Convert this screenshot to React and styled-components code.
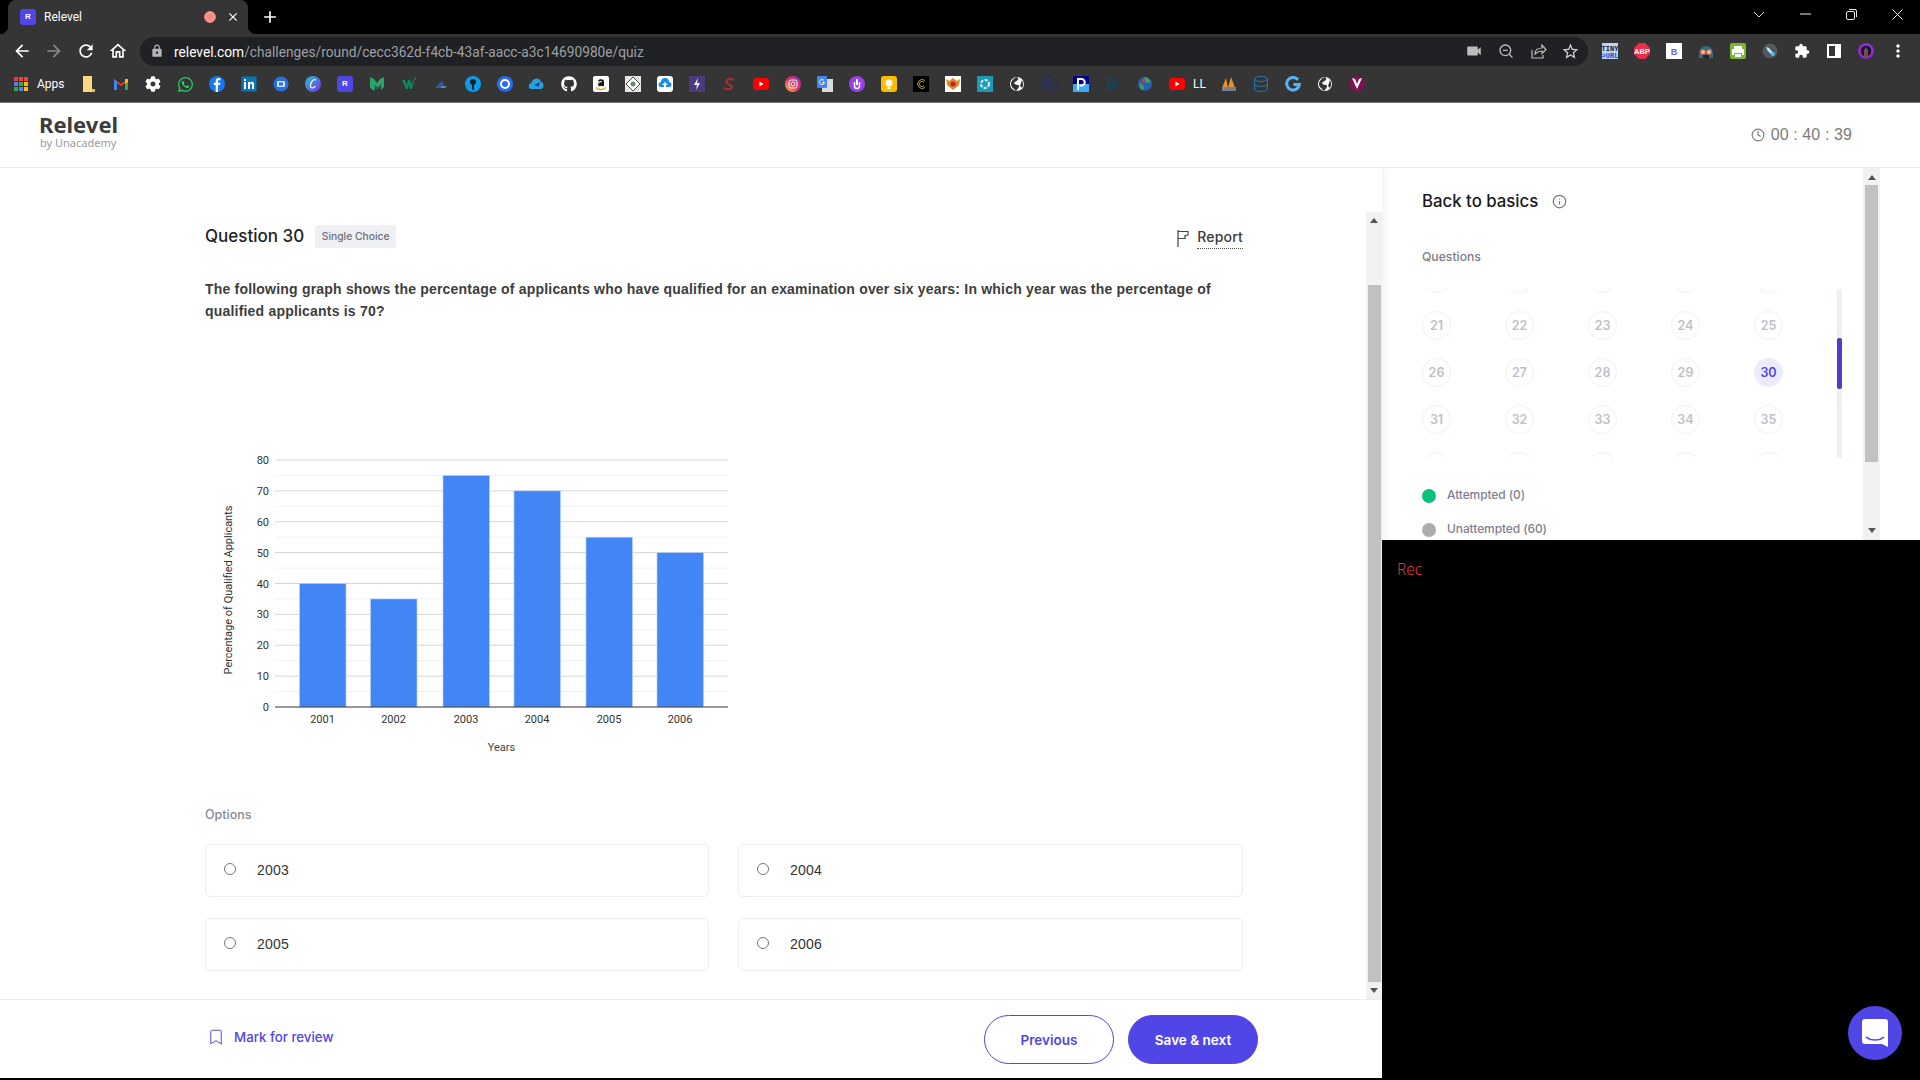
import React from 'react'
import styled, { createGlobalStyle } from 'styled-components'
import { FaWhatsapp, FaGithub, FaCog } from 'react-icons/fa'
import {
  MdArrowBack, MdArrowForward, MdRefresh, MdOutlineHome, MdLock, MdVideocam,
  MdStarBorder, MdExtension, MdMoreVert, MdClose, MdAdd,
} from 'react-icons/md'
import { LuZoomOut, LuClock, LuInfo, LuBookmark } from 'react-icons/lu'

const Global = createGlobalStyle`
  html, body { margin: 0; padding: 0; background: #fff; }
  body { font-family: "Inter", "Liberation Sans", sans-serif; overflow: hidden; }
  * { box-sizing: border-box; }
`

const Page = styled.div`
  width: 1920px;
  height: 1080px;
  display: flex;
  flex-direction: column;
  overflow: hidden;
`

/* browser chrome */
const TabStrip = styled.div`
  height: 34px;
  background: #000;
  display: flex;
  align-items: flex-end;
  padding-left: 8px;
  color: #fff;
`
const Tab = styled.div`
  position: relative;
  width: 240px;
  height: 34px;
  background: #353535;
  border-radius: 8px 8px 0 0;
  display: flex;
  align-items: center;
  padding: 0 8px 0 12px;
  font: 12px "Roboto", sans-serif;
  &:before, &:after {
    content: "";
    position: absolute;
    bottom: 0;
    width: 8px;
    height: 8px;
  }
  &:before { left: -8px; background: radial-gradient(circle at 0 0, transparent 8px, #353535 8.5px); }
  &:after { right: -8px; background: radial-gradient(circle at 100% 0, transparent 8px, #353535 8.5px); }
`
const Favicon = styled.span`
  width: 16px;
  height: 16px;
  border-radius: 3px;
  background: #5046e5;
  color: #fff;
  font: bold 8px/16px "Liberation Sans", sans-serif;
  text-align: center;
  flex: none;
`
const TabTitle = styled.span`
  margin-left: 8px;
  flex: 1;
`
const RecDot = styled.span`
  width: 12px;
  height: 12px;
  border-radius: 50%;
  background: #f28b82;
  border: 1px solid #e57373;
  box-shadow: inset 0 0 0 1px #f9b4ae;
  margin-right: 10px;
`
const NewTab = styled.div`
  width: 22px;
  height: 34px;
  margin-left: 11px;
  display: flex;
  align-items: center;
  justify-content: center;
  font-size: 20px;
`
const WindowButtons = styled.div`
  margin-left: auto;
  display: flex;
  height: 28px;
  align-items: center;
  align-self: flex-start;
`
const WindowButton = styled.div`
  width: 46px;
  height: 28px;
  display: flex;
  align-items: center;
  justify-content: center;
`
const Toolbar = styled.div`
  height: 34px;
  background: #353535;
  display: flex;
  align-items: center;
  color: #fff;
`
const NavButton = styled.div`
  width: 32px;
  height: 32px;
  display: flex;
  align-items: center;
  justify-content: center;
  font-size: ${p => p.$size || 20}px;
  color: ${p => p.$dim ? '#8b8b8b' : '#fff'};
`
const NavGroup = styled.div`
  display: flex;
  padding-left: 6px;
`
const Omnibox = styled.div`
  margin-left: 6px;
  width: 1448px;
  height: 29px;
  border-radius: 15px;
  background: #202124;
  display: flex;
  align-items: center;
  padding-left: 10px;
  font: 13.72px "Roboto", sans-serif;
  color: #9aa0a6;
`
const UrlText = styled.span`
  padding-top: 1px;
`
const LockIcon = styled(MdLock)`
  font-size: 14px;
  color: #b5b5b5;
  margin-right: 10px;
`
const Host = styled.span`
  color: #fff;
`
const OmniActions = styled.div`
  margin-left: auto;
  display: flex;
  padding-right: 2px;
  color: #bdbdbd;
`
const Extensions = styled.div`
  display: flex;
  margin-left: 6px;
`
const BookmarkBar = styled.div`
  height: 35px;
  background: #353535;
  border-bottom: 1px solid #777;
  display: flex;
  align-items: center;
  padding: 0 0 2px 5px;
  color: #fff;
`
const BookmarkSlot = styled.div`
  width: ${p => p.$width || 32}px;
  height: 32px;
  display: flex;
  align-items: center;
  justify-content: ${p => p.$width ? 'flex-start' : 'center'};
  flex: none;
  font-size: 16px;
`
const AppsLabel = styled.span`
  font: 12px "Roboto", sans-serif;
  width: 36px;
  flex: none;
`
const LLabel = styled.span`
  font: 12px "Roboto", sans-serif;
`

const Svg = ({ children }) => <svg width="16" height="16" viewBox="0 0 16 16">{children}</svg>

const Globe = () => (
  <Svg><circle cx="8" cy="8" r="7" fill="#fff" /><path d="M8 1c3 2 0 4-2 5s0 3 3 3-1 5-2 6c-3-3-5-4-5-7s3-6 6-7zM13 4c1 2 2 5 0 8l-2-2z" fill="#353535" /></Svg>
)
const Youtube = () => (
  <Svg><rect y="2" width="16" height="12" rx="3" fill="#f00" /><path d="M6.500 5.500l4 2.500-4 2.500z" fill="#fff" /></Svg>
)

const bookmarks = [
  { icon: <Svg><path d="M2 0h9v13h3v3H2z" fill="#fcd77f" /><path d="M11 13h3v3h-3z" fill="#f5b942" /></Svg> },
  { icon: <Svg><path d="M1 14V3l7 5 7-5v11h-3V7L8 10 4 7v7z" fill="#ea4335" /><path d="M1 14V3l3 3v8z" fill="#4285f4" /><path d="M15 14V3l-3 3v8z" fill="#34a853" /><path d="M12 3h3v3l-3 2z" fill="#fbbc04" /></Svg> },
  { icon: <FaCog /> },
  { icon: <FaWhatsapp color="#25d366" style={{ fontSize: 17 }} /> },
  { icon: <Svg><circle cx="8" cy="8" r="8" fill="#1877f2" /><path d="M9 16V9h2l.4-2.300H9V5.300c0-.7.3-1.100 1.200-1.100h1.200V2.200C11 2.100 10.300 2 9.600 2 7.800 2 6.700 3.100 6.700 5v1.700H4.800V9h1.900v7z" fill="#fff" /></Svg> },
  { icon: <Svg><rect width="15" height="15" x=".5" y=".5" fill="#0a76b4" /><path d="M3 6h2v7H3zM3 3h2v2H3zM7 6h2v1c.5-.8 1.200-1.200 2-1.200 1.500 0 2 1 2 2.700V13h-2V9c0-.8-.3-1.300-1-1.300S9 8.300 9 9v4H7z" fill="#fff" /></Svg> },
  { icon: <Svg><circle cx="8" cy="8" r="7.500" fill="#2272e6" /><rect x="4" y="5" width="8" height="6" rx="1" fill="#cfe0fb" /><rect x="6" y="6.500" width="4" height="3" fill="#2272e6" /></Svg> },
  { icon: <Svg><defs><linearGradient id="cv" x1="0" y1="0" x2="1" y2="1"><stop offset="0" stopColor="#1fc9d3" /><stop offset="1" stopColor="#7d2ae8" /></linearGradient></defs><circle cx="8" cy="8" r="8" fill="url(#cv)" /><path d="M11 4C8 2.500 5 7 5.500 10.500 6 13 9 12 10.500 10" fill="none" stroke="#fff" strokeWidth="1.200" /></Svg> },
  { icon: <Favicon>R</Favicon> },
  { icon: <Svg><path d="M1 1l4 2 3 4 3-4 4-2v10l-3 3V8l-3 4-3-3-.5 6L1 12z" fill="#2ba36a" /><path d="M6 11l2 2 4-4" fill="none" stroke="#1a6e46" strokeWidth="1.200" /></Svg> },
  { icon: <Svg><path d="M1 4h3l1.500 5L7 4h2l1.500 5L12 4h1l-2 9H9L8 8l-1 5H5z" fill="#0e8a5b" /><path d="M13 1h2v3h-2z" fill="#0e8a5b" opacity=".6" /></Svg> },
  { icon: <Svg><path d="M2 12L9 5l2 3-4 4z" fill="#2c5aa8" /><path d="M9 10h5l-2 2H7z" fill="#5e86c9" /></Svg> },
  { icon: <Svg><circle cx="8" cy="8" r="8" fill="#0a9ceb" /><circle cx="8" cy="6" r="3" fill="#14202c" /><rect x="7" y="7" width="2" height="7" fill="#14202c" /></Svg> },
  { icon: <Svg><circle cx="8" cy="8" r="8" fill="#2b6bf3" /><circle cx="8" cy="8" r="4" fill="none" stroke="#fff" strokeWidth="2" /></Svg> },
  { icon: <Svg><path d="M3 13a3 3 0 0 1-.5-6A5 5 0 0 1 12 5.500 4 4 0 0 1 12 13z" fill="#28a0e8" /><path d="M5 9l6-3-1.500 5-1.500-1z" fill="#10456b" /></Svg> },
  { icon: <FaGithub /> },
  { icon: <Svg><rect width="16" height="16" rx="2" fill="#fff" /><path d="M5 4.500c2-2 6-1.500 6 1V10l-1.800.2-.2-.7c-1.500 1.200-4 1-4-1 0-2 2.500-2.500 4-2.300 0-1.500-2-1.500-3-.5z" fill="#111" /><path d="M3 11.500c3 2.500 7 2.500 10 0" fill="none" stroke="#f90" strokeWidth="1.300" /></Svg> },
  { icon: <Svg><rect width="16" height="16" fill="#e6e6e6" /><path d="M8 1l7 7-7 7-7-7z" fill="#fff" stroke="#444" /><circle cx="8" cy="8" r="2.500" fill="#5a8f6a" /></Svg> },
  { icon: <Svg><rect width="16" height="16" rx="3" fill="#fff" /><path d="M4 11a2.500 2.500 0 0 1 0-5 4 4 0 0 1 8 0 2.500 2.500 0 0 1 0 5z" fill="#1a8ceb" /><path d="M8 6l3 3H9v3H7V9H5z" fill="#fff" /></Svg> },
  { icon: <Svg><rect width="16" height="16" fill="#4c3a80" /><path d="M9 2L5 9h3l-1 5 4-7H8z" fill="#fff" /></Svg> },
  { icon: <Svg><path d="M13 4C10 2 4 3 5.500 6.500S12 8 10.500 11.500 5 13 2.500 12" fill="none" stroke="#b02a2a" strokeWidth="2" /></Svg> },
  { icon: <Youtube /> },
  { icon: <Svg><defs><linearGradient id="ig" x1="0" y1="1" x2="1" y2="0"><stop offset="0" stopColor="#fdc830" /><stop offset=".5" stopColor="#e1306c" /><stop offset="1" stopColor="#833ab4" /></linearGradient></defs><circle cx="8" cy="8" r="8" fill="url(#ig)" /><rect x="4" y="4" width="8" height="8" rx="2" fill="none" stroke="#fff" /><circle cx="8" cy="8" r="2" fill="none" stroke="#fff" /></Svg> },
  { icon: <Svg><rect x="5" y="3" width="11" height="13" fill="#dcdcdc" /><rect width="10" height="12" rx="1" fill="#4285f4" /><path d="M7 4.500A2.500 2.500 0 1 0 7.500 6.500H5" fill="none" stroke="#fff" /></Svg> },
  { icon: <Svg><circle cx="8" cy="8" r="8" fill="#9b3fe8" /><path d="M5.500 6v4a2.500 2.500 0 0 0 5 0V6" fill="none" stroke="#fff" strokeWidth="1.500" /><path d="M7 3h2v6H7z" fill="#fff" /></Svg> },
  { icon: <Svg><rect width="16" height="16" rx="3" fill="#fbbc04" /><circle cx="8" cy="7" r="3.500" fill="#fff" /><rect x="6.500" y="11" width="3" height="2" fill="#fff" /></Svg> },
  { icon: <Svg><rect width="16" height="16" fill="#000" /><path d="M12 4.500A4.500 4.500 0 1 0 12 11.500M11 6.500A2.600 2.600 0 1 0 11 9.500" fill="none" stroke="#a89a1e" /></Svg> },
  { icon: <Svg><rect width="16" height="16" fill="#fff" /><path d="M1 3l3 2 4-3 4 3 3-2-1 6-6 5-6-5z" fill="#d98a2b" /><circle cx="8" cy="8" r="2.500" fill="#c22" /></Svg> },
  { icon: <Svg><rect width="16" height="16" fill="#1c9bb5" /><circle cx="8" cy="8" r="4" fill="none" stroke="#d8f3f7" strokeWidth="2" strokeDasharray="3 1.500" /></Svg> },
  { icon: <Globe /> },
  { icon: <Svg><circle cx="8" cy="8" r="7.500" fill="none" stroke="#1a2a80" strokeWidth=".8" /><path d="M4 5v6M7 5L4.500 8 7 11M9 11V5h1.500a1.500 1.500 0 0 1 0 3.200H9" fill="none" stroke="#1a2a99" /></Svg> },
  { icon: <Svg><rect width="16" height="8" fill="#00008b" /><rect y="8" width="16" height="8" fill="#3fa9f5" /><path d="M5 14V3h3.500a3 3 0 0 1 0 6.500H6.500" fill="none" stroke="#fff" strokeWidth="2" /></Svg> },
  { icon: <Svg><path d="M3 1l10 7-8 6M3 1v14M3 8h7" fill="none" stroke="#124a66" strokeWidth="1.500" /></Svg> },
  { icon: <Svg><circle cx="8" cy="8" r="7" fill="#2b5db5" /><path d="M7 1c3 0 6 2 7 5l-4 1-2-2zM2 7l4 2 1 4-3 1z" fill="#3ea34a" /><circle cx="6" cy="5" r="1.500" fill="#d33" /></Svg> },
  { icon: <Youtube /> },
  { icon: <LLabel>LL</LLabel>, width: 20 },
  { icon: <Svg><path d="M1 12L5 2l2 10zM7 12l3-11 4 11z" fill="#e8912d" /><rect x="1" y="11" width="14" height="4" fill="#7d7d92" /></Svg> },
  { icon: <Svg><ellipse cx="8" cy="3" rx="6.500" ry="2.500" fill="none" stroke="#1f7ab0" /><path d="M1.500 3v10c0 3.300 13 3.300 13 0V3M1.500 8c0 3.300 13 3.300 13 0" fill="none" stroke="#1f7ab0" /></Svg> },
  { icon: <Svg><path d="M13 3.800A6.300 6.300 0 1 0 14.300 8.500H8.500" fill="none" stroke="#5ab1f2" strokeWidth="3" /></Svg> },
  { icon: <Globe /> },
  { icon: <Svg><circle cx="8" cy="8" r="8" fill="#7a1450" /><path d="M3 2l5 11 5-11-3 1-2 5-2-5z" fill="#fff" /></Svg> },
]

/* app header */
const AppHeader = styled.header`
  height: 65px;
  flex: none;
  background: #fff;
  border-bottom: 1px solid #ececec;
  display: flex;
  align-items: center;
  justify-content: space-between;
  padding: 0 68px 0 39px;
`
const Logo = styled.div`
  display: flex;
  flex-direction: column;
  margin-bottom: 9px;
`
const LogoName = styled.span`
  font: 700 22px/24px "Noto Sans", sans-serif;
  color: #3c3c3c;
`
const LogoBy = styled.span`
  font: 400 11px/12px "Noto Sans", sans-serif;
  color: #9a9a9a;
  margin: 1px 0 0 1px;
`
const Timer = styled.div`
  display: flex;
  align-items: center;
  gap: 6px;
  font: 16px "Liberation Sans", sans-serif;
  color: #7c7c7c;
  letter-spacing: .1px;
`

/* body */
const Body = styled.div`
  flex: 1;
  display: flex;
  min-height: 0;
`
const Left = styled.div`
  width: 1382px;
  display: flex;
  flex-direction: column;
  border-bottom: 2px solid #000;
`
const MainRow = styled.div`
  flex: 1;
  display: flex;
  min-height: 0;
`
const QuestionPane = styled.main`
  width: 1366px;
  padding: 57px 0 0 205px;
`
const QuestionInner = styled.div`
  width: 1038px;
`
const QuestionHead = styled.div`
  display: flex;
  align-items: center;
  height: 23px;
`
const QuestionTitle = styled.h2`
  margin: 0 0 1px;
  font: 500 17px/22px "Inter", sans-serif;
  color: #222;
`
const Badge = styled.span`
  margin-left: 11px;
  width: 81px;
  height: 23px;
  border-radius: 3px;
  background: #eef0f4;
  color: #6e6e78;
  font: 500 10.300px/23px "Inter", sans-serif;
  text-align: center;
`
const Report = styled.div`
  margin-left: auto;
  display: flex;
  align-items: center;
  gap: 7px;
  font: 500 14px/20px "Inter", sans-serif;
  letter-spacing: .2px;
  color: #3b3b3b;
  padding-top: 3px;
`
const ReportText = styled.span`
  border-bottom: 1px dotted #555;
  padding-bottom: 1px;
`
const QuestionText = styled.p`
  margin: 30px 0 0;
  font: 700 14px/22px "Liberation Sans", sans-serif;
  color: #3d3d3d;
  letter-spacing: .2px;
`
const ChartWrap = styled.div`
  margin: 118px 0 0 5px;
  height: 320px;
`
const OptionsLabel = styled.div`
  margin-top: 47px;
  font: 500 12.500px/16px "Inter", sans-serif;
  color: #8a8a93;
`
const OptionsGrid = styled.div`
  margin-top: 21px;
  display: grid;
  grid-template-columns: 504px 505px;
  column-gap: 29px;
  row-gap: 21px;
`
const OptionCard = styled.label`
  height: 53px;
  border: 1px solid #eceef3;
  border-radius: 5px;
  display: flex;
  align-items: center;
  padding: 0 0 2px 18px;
  font: 14px "Liberation Sans", sans-serif;
  color: #333;
  letter-spacing: .2px;
`
const Radio = styled.span`
  width: 12px;
  height: 12px;
  border: 1px solid #777;
  border-radius: 50%;
  margin: -2px 21px 0 0;
`

/* scrollbars */
const Track = styled.div`
  width: ${p => p.$width}px;
  margin-top: ${p => p.$top || 0}px;
  background: #f1f1f1;
  display: flex;
  flex-direction: column;
  align-items: center;
`
const Arrow = styled.div`
  width: 0;
  height: 0;
  flex: none;
  margin: ${p => p.$margin};
  border-left: 4px solid transparent;
  border-right: 4px solid transparent;
  ${p => p.$down ? 'border-top: 5px solid #555;' : 'border-bottom: 5px solid #555;'}
`
const Thumb = styled.div`
  width: ${p => p.$width}px;
  height: ${p => p.$height}px;
  margin-top: ${p => p.$top}px;
  background: #c1c1c1;
  flex: none;
`
const TrackSpacer = styled.div`
  flex: 1;
`

/* footer */
const Footer = styled.footer`
  height: 79px;
  flex: none;
  border-top: 1px solid #ececec;
  display: flex;
  align-items: center;
  padding: 0 124px 0 207px;
`
const Review = styled.div`
  display: flex;
  align-items: center;
  gap: 9px;
  margin-top: -4px;
  color: #5046e5;
  font: 500 13.300px "Inter", sans-serif;
`
const Actions = styled.div`
  margin-left: auto;
  display: flex;
  gap: 14px;
`
const Button = styled.button`
  width: 130px;
  height: 49px;
  padding: 1px 0 0;
  border-radius: 25px;
  border: 1px solid #5046e5;
  background: ${p => p.$primary ? '#5046e5' : '#fff'};
  color: ${p => p.$primary ? '#fff' : '#5046e5'};
  font: 600 13.500px "Inter", sans-serif;
`

/* right column */
const Right = styled.aside`
  flex: 1;
  display: flex;
  flex-direction: column;
`
const Panel = styled.div`
  height: 372px;
  flex: none;
  display: flex;
  background: #fff;
  overflow: hidden;
  padding-right: 40px;
  box-shadow: inset 8px 0 8px -6px rgba(0, 0, 0, .06);
`
const PanelContent = styled.div`
  width: 481px;
  padding: 21px 0 0 40px;
`
const PanelTitle = styled.div`
  display: flex;
  align-items: center;
  gap: 14px;
  height: 24px;
  font: 500 16.800px/24px "Inter", sans-serif;
  color: #1a1a1a;
`
const SectionLabel = styled.div`
  margin-top: 36px;
  font: 500 12.200px/16px "Inter", sans-serif;
  color: #7b7b86;
`
const GridRow = styled.div`
  margin-top: 24px;
  width: 420px;
  height: 169px;
  display: flex;
  justify-content: space-between;
`
const GridClip = styled.div`
  height: 169px;
  overflow: hidden;
`
const NumberGrid = styled.div`
  margin-top: -25px;
  display: grid;
  grid-template-columns: repeat(5, 29px);
  grid-auto-rows: 29px;
  column-gap: 54px;
  row-gap: 18px;
`
const NumberCell = styled.div`
  width: 29px;
  height: 29px;
  border-radius: 50%;
  border: 1px solid ${p => p.$active ? '#ecebfb' : '#f1f1f4'};
  background: ${p => p.$active ? '#ecebfb' : '#fff'};
  color: ${p => p.$active ? '#5046e5' : '#c0bfc6'};
  font: 600 12.500px/27px "Inter", sans-serif;
  text-align: center;
`
const MiniTrack = styled.div`
  width: 5px;
  height: 169px;
  background: #edf0f5;
  padding-top: 49px;
`
const MiniThumb = styled.div`
  height: 51px;
  border-radius: 2px;
  background: #4a3fc9;
`
const Legend = styled.div`
  margin-top: 28px;
  display: flex;
  flex-direction: column;
  gap: 17px;
`
const LegendItem = styled.div`
  display: flex;
  align-items: center;
  gap: 11px;
  height: 17px;
  font: 500 12px/17px "Inter", sans-serif;
  letter-spacing: -.1px;
  color: #7f7f8f;
`
const LegendDot = styled.span`
  width: 14px;
  height: 14px;
  border-radius: 50%;
  margin: 3px 0 0;
  background: ${p => p.$color};
`
const RecPanel = styled.div`
  position: relative;
  flex: 1;
  background: #000;
  padding: 18px 15px;
  color: #f0403c;
  font: 300 15.500px/22px "Open Sans", sans-serif;
`
const ChatBubble = styled.div`
  position: absolute;
  right: 18px;
  bottom: 20px;
  width: 54px;
  height: 54px;
  border-radius: 50%;
  background: #5046e5;
  display: flex;
  align-items: center;
  justify-content: center;
`

const bars = [
  { year: '2001', value: 40, x: 299.5 },
  { year: '2002', value: 35, x: 370.5 },
  { year: '2003', value: 75, x: 443 },
  { year: '2004', value: 70, x: 514 },
  { year: '2005', value: 55, x: 586 },
  { year: '2006', value: 50, x: 657 },
]

// chart coordinates are page pixels, shifted into the svg by the viewBox
const Chart = () => {
  const base = 707
  const unit = 247 / 80
  const ticks = [...Array(17).keys()].map(i => i * 5)
  return (
    <svg width="540" height="320" viewBox="210 440 540 320">
      {ticks.slice(1).map(t => (
        <line key={t} x1="275" x2="728" y1={base - t * unit} y2={base - t * unit}
          stroke={t % 10 ? '#f1f1f1' : '#d6d6d6'} />
      ))}
      {ticks.filter(t => t % 10 === 0).map(t => (
        <text key={t} x="269" y={base - t * unit + 4} textAnchor="end" fontSize="11"
          fontFamily="Roboto, sans-serif" fill="#333">{t}</text>
      ))}
      {bars.map(b => (
        <g key={b.year}>
          <rect x={b.x} y={base - b.value * unit} width="46.500" height={b.value * unit}
            fill="#4285f4" stroke="#b9d2fb" strokeWidth=".6" />
          <text x={b.x + 23} y="722.500" textAnchor="middle" fontSize="11"
            fontFamily="Roboto, sans-serif" fill="#333">{b.year}</text>
        </g>
      ))}
      <line x1="275" x2="728" y1={base} y2={base} stroke="#333" />
      <text x="501.500" y="751" textAnchor="middle" fontSize="11" fontFamily="Roboto, sans-serif"
        fill="#444">Years</text>
      <text transform="translate(232 590) rotate(-90)" textAnchor="middle" fontSize="11"
        fontFamily="Roboto, sans-serif" fill="#333">Percentage of Qualified Applicants</text>
    </svg>
  )
}

const AppsIcon = () => (
  <svg width="14" height="14" viewBox="0 0 14 14">
    {['#ea4335', '#ea4335', '#ea4335', '#4285f4', '#34a853', '#fbbc04', '#34a853', '#4285f4', '#fbbc04'].map((c, i) => (
      <rect key={i} x={(i % 3) * 5} y={Math.floor(i / 3) * 5} width="4" height="4" fill={c} />
    ))}
  </svg>
)

const ShareIcon = () => (
  <svg width="17" height="17" viewBox="0 0 17 17" fill="none" stroke="#bdbdbd" strokeWidth="1.200">
    <path d="M2 7v8h11v-3M5 11c0-4 3-6 7-6V2l4 4.500-4 4V8c-3 0-5 1-7 3z" />
  </svg>
)

const SidePanelIcon = () => (
  <svg width="14" height="14" viewBox="0 0 14 14">
    <path d="M0 0h14v14H0z" fill="#fff" /><path d="M2 2h6v10H2z" fill="#353535" />
  </svg>
)

const extensions = [
  <Svg><rect width="16" height="16" fill="#b9d4f5" /><text x="8" y="7.500" fontSize="7" fontWeight="bold" fontFamily="Liberation Mono" textAnchor="middle" fill="#123">TINY</text><text x="8" y="14.500" fontSize="7" fontWeight="bold" fontFamily="Liberation Mono" textAnchor="middle" fill="#1450d8">&gt;URL</text></Svg>,
  <Svg><path d="M5 0h6l5 5v6l-5 5H5l-5-5V5z" fill="#ee2b4b" /><text x="8" y="11" fontSize="7.500" fontWeight="bold" fontFamily="Liberation Sans" textAnchor="middle" fill="#fff">ABP</text></Svg>,
  <Svg><rect width="16" height="16" fill="#fff" /><text x="8" y="11.500" fontSize="9" fontWeight="bold" fontFamily="Liberation Sans" textAnchor="middle" fill="#6a5fd0">B</text></Svg>,
  <Svg><path d="M1 10a7 7 0 0 1 14 0v5H1z" fill="#2e6f7e" /><circle cx="5" cy="9" r="2.500" fill="#f4b6a6" stroke="#d9532c" /><circle cx="11" cy="9" r="2.500" fill="#f4b6a6" stroke="#d9532c" /><rect x="5" y="12" width="6" height="3" fill="#1a2a30" /></Svg>,
  <Svg><rect width="16" height="16" rx="2" fill="#7cb82f" /><path d="M4 3h8v3H4zM2 6h12v6h-2v-2H4v2H2zM5 11h6v3H5z" fill="#fff" /></Svg>,
  <Svg><circle cx="8" cy="8" r="7.500" fill="#55585e" /><path d="M4 4l3 1 5 6-1.500 1.500-5-5z" fill="#bfefff" /><circle cx="11" cy="11" r="2" fill="#38c7f0" /></Svg>,
  <MdExtension />,
  <SidePanelIcon />,
  <Svg><circle cx="8" cy="8" r="8" fill="#7a2be0" /><circle cx="8" cy="8" r="6" fill="#1a1038" stroke="#f02aa8" /><path d="M6 15V7l2-3 2 3v8z" fill="#6a5244" /></Svg>,
]

// only rows 21-35 show their numbers, the rows around them are clipped to a sliver of the ring
const rows = [...Array(25).keys()].map(i => i + 16)

const App = () => {
  return (
    <Page>
      <Global />
      <TabStrip>
        <Tab>
          <Favicon>R</Favicon>
          <TabTitle>Relevel</TabTitle>
          <RecDot />
          <MdClose size={14} />
        </Tab>
        <NewTab><MdAdd /></NewTab>
        <WindowButtons>
          <WindowButton>
            <svg width="12" height="7" viewBox="0 0 12 7" fill="none" stroke="#ddd"><path d="M1 1l5 5 5-5" /></svg>
          </WindowButton>
          <WindowButton>
            <svg width="11" height="2" viewBox="0 0 11 2" stroke="#eee"><path d="M0 1h11" /></svg>
          </WindowButton>
          <WindowButton>
            <svg width="11" height="11" viewBox="0 0 11 11" fill="none" stroke="#e8e8e8">
              <rect x=".5" y="2.500" width="8" height="8" rx="1.500" /><path d="M3 .5h6a1.500 1.500 0 0 1 1.500 1.500v6" />
            </svg>
          </WindowButton>
          <WindowButton>
            <svg width="11" height="11" viewBox="0 0 11 11" stroke="#eee"><path d="M.5.5l10 10M10.500.5l-10 10" /></svg>
          </WindowButton>
        </WindowButtons>
      </TabStrip>
      <Toolbar>
        <NavGroup>
          <NavButton><MdArrowBack /></NavButton>
          <NavButton $dim><MdArrowForward /></NavButton>
          <NavButton><MdRefresh /></NavButton>
          <NavButton><MdOutlineHome /></NavButton>
        </NavGroup>
        <Omnibox>
          <LockIcon />
          <UrlText><Host>relevel.com</Host>/challenges/round/cecc362d-f4cb-43af-aacc-a3c14690980e/quiz</UrlText>
          <OmniActions>
            <NavButton $size={18} $dim><MdVideocam color="#bdbdbd" /></NavButton>
            <NavButton $size={16}><LuZoomOut color="#bdbdbd" /></NavButton>
            <NavButton><ShareIcon /></NavButton>
            <NavButton $size={19}><MdStarBorder color="#d0d0d0" /></NavButton>
          </OmniActions>
        </Omnibox>
        <Extensions>
          {extensions.map((icon, i) => <BookmarkSlot key={i}>{icon}</BookmarkSlot>)}
          <NavButton><MdMoreVert /></NavButton>
        </Extensions>
      </Toolbar>
      <BookmarkBar>
        <BookmarkSlot><AppsIcon /></BookmarkSlot>
        <AppsLabel>Apps</AppsLabel>
        {bookmarks.map((b, i) => <BookmarkSlot key={i} $width={b.width}>{b.icon}</BookmarkSlot>)}
      </BookmarkBar>

      <AppHeader>
        <Logo>
          <LogoName>Relevel</LogoName>
          <LogoBy>by Unacademy</LogoBy>
        </Logo>
        <Timer><LuClock size={14} />00 : 40 : 39</Timer>
      </AppHeader>

      <Body>
        <Left>
          <MainRow>
            <QuestionPane>
              <QuestionInner>
                <QuestionHead>
                  <QuestionTitle>Question 30</QuestionTitle>
                  <Badge>Single Choice</Badge>
                  <Report>
                    <svg width="14" height="17" viewBox="0 0 14 17" fill="none" stroke="#444" strokeWidth="1.200">
                      <path d="M2 0v17M2 1.500h10v3.500l-3 .5v3H2" />
                    </svg>
                    <ReportText>Report</ReportText>
                  </Report>
                </QuestionHead>
                <QuestionText>
                  The following graph shows the percentage of applicants who have qualified for an examination over six years: In which year was the percentage of qualified applicants is 70?
                </QuestionText>
                <ChartWrap><Chart /></ChartWrap>
                <OptionsLabel>Options</OptionsLabel>
                <OptionsGrid>
                  {['2003', '2004', '2005', '2006'].map(o => (
                    <OptionCard key={o}><Radio />{o}</OptionCard>
                  ))}
                </OptionsGrid>
              </QuestionInner>
            </QuestionPane>
            <Track $width={16} $top={44}>
              <Arrow $margin="6px 0 0" />
              <Thumb $width={13} $height={697} $top={62} />
              <TrackSpacer />
              <Arrow $down $margin="0 0 6px" />
            </Track>
          </MainRow>
          <Footer>
            <Review><LuBookmark size={18} strokeWidth={1.300} />Mark for review</Review>
            <Actions>
              <Button>Previous</Button>
              <Button $primary>Save &amp; next</Button>
            </Actions>
          </Footer>
        </Left>
        <Right>
          <Panel>
            <PanelContent>
              <PanelTitle>Back to basics <LuInfo size={15} color="#777" /></PanelTitle>
              <SectionLabel>Questions</SectionLabel>
              <GridRow>
                <GridClip>
                  <NumberGrid>
                    {rows.map(n => (
                      <NumberCell key={n} $active={n === 30}>{n > 20 && n < 36 ? n : ''}</NumberCell>
                    ))}
                  </NumberGrid>
                </GridClip>
                <MiniTrack><MiniThumb /></MiniTrack>
              </GridRow>
              <Legend>
                <LegendItem><LegendDot $color="#0cc07d" />Attempted (0)</LegendItem>
                <LegendItem><LegendDot $color="#acacac" />Unattempted (60)</LegendItem>
              </Legend>
            </PanelContent>
            <Track $width={17}>
              <Arrow $margin="7px 0 0" />
              <Thumb $width={13} $height={277} $top={5} />
              <TrackSpacer />
              <Arrow $down $margin="0 0 7px" />
            </Track>
          </Panel>
          <RecPanel>
            Rec
            <ChatBubble>
              <svg width="26" height="28" viewBox="0 0 26 28">
                <path d="M3 0h20a3 3 0 0 1 3 3v25l-6-3H3a3 3 0 0 1-3-3V3a3 3 0 0 1 3-3z" fill="#fff" />
                <path d="M4 18c5 4 13 4 18 0" fill="none" stroke="#5046e5" strokeWidth="1.500" />
              </svg>
            </ChatBubble>
          </RecPanel>
        </Right>
      </Body>
    </Page>
  )
}

export default App
